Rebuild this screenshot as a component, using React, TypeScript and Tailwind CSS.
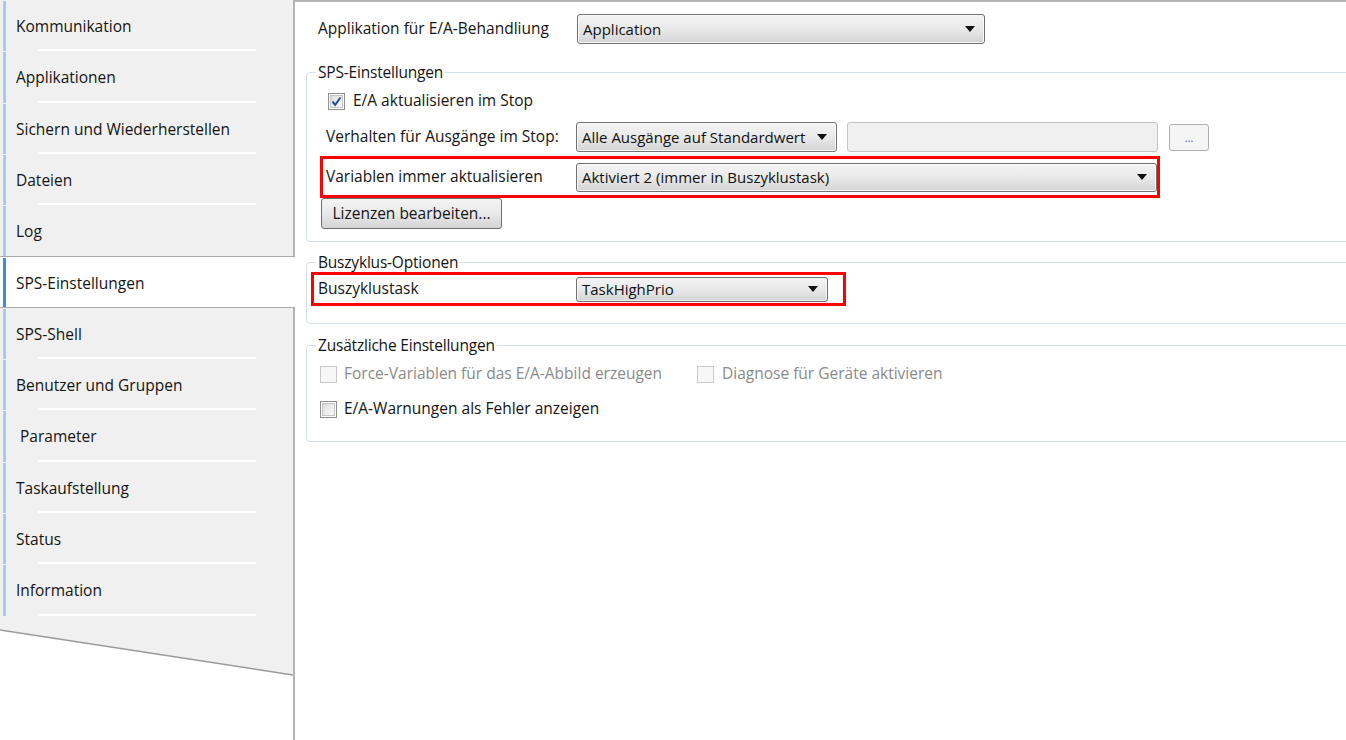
import React from "react";

const items = [
  "Kommunikation",
  "Applikationen",
  "Sichern und Wiederherstellen",
  "Dateien",
  "Log",
  "SPS-Einstellungen",
  "SPS-Shell",
  "Benutzer und Gruppen",
  "\u00a0Parameter",
  "Taskaufstellung",
  "Status",
  "Information",
];

function Arrow() {
  return (
    <svg width="10" height="6" viewBox="0 0 10 6" className="shrink-0">
      <polygon points="0,0 10,0 5,6" fill="#111" />
    </svg>
  );
}

function Combo({ text, className }: { text: string; className: string }) {
  return (
    <div
      className={`flex items-center justify-between rounded-[3px] border border-[#707070] bg-linear-to-b from-[#f4f4f4] via-[#e9e9e9] to-[#d4d4d4] pl-[5px] pr-[9px] text-[15px] shadow-[inset_0_0_0_1px_#fafafa] ${className}`}
    >
      <span className="whitespace-nowrap text-[#111]">{text}</span>
      <Arrow />
    </div>
  );
}

function Check({ state }: { state: "checked" | "unchecked" | "disabled" }) {
  if (state === "disabled") {
    return (
      <div className="h-[17px] w-[17px] shrink-0 border border-[#c9c9c9] bg-[#f7f7f7]" />
    );
  }
  return (
    <div className="flex h-[17px] w-[17px] shrink-0 items-center justify-center border border-[#8e8f8f] bg-white">
      <div className="flex h-[13px] w-[13px] items-center justify-center border border-[#c4c4c4] bg-linear-to-br from-[#dcdcdc] to-[#fbfbfb]">
        {state === "checked" && (
          <svg width="11" height="11" viewBox="0 0 11 11">
            <path d="M1.5 5.5 L4.2 8.8 L9.5 1.5" stroke="#2b4d96" strokeWidth="2" fill="none" />
          </svg>
        )}
      </div>
    </div>
  );
}

function Sidebar() {
  return (
    <div className="flex w-[295px] shrink-0 flex-col bg-white">
      {items.map((t, i) => {
        const sel = i === 5;
        const sep = !sel && i !== 4;
        return (
          <div
            key={i}
            className={`relative flex h-[51.3px] shrink-0 items-center pt-[2px] ${
              sel
                ? "border-y border-[#a9a9a9] bg-white"
                : "border-r-2 border-[#b4b4b4] bg-[#f0f0f0]"
            }`}
          >
            <div
              className={`absolute left-[3px] top-[1px] bottom-0 w-[3px] ${
                sel ? "bg-[#3b8de6]" : "bg-[#a3ccf5]"
              }`}
            />
            <span className="pl-[16px] text-[#141414]">{t}</span>
            {sep && (
              <div className="absolute bottom-0 left-[38px] h-[2px] w-[218px] bg-white" />
            )}
          </div>
        );
      })}
      <svg width="295" height="124" viewBox="0 0 295 124" className="shrink-0">
        <polygon points="0,0 293,0 293,59 0,14" fill="#f0f0f0" />
        <line x1="0" y1="14" x2="293" y2="59" stroke="#9a9a9a" strokeWidth="1.5" />
        <line x1="294" y1="0" x2="294" y2="124" stroke="#b4b4b4" strokeWidth="2" />
      </svg>
    </div>
  );
}

export default function App() {
  return (
    <div className="flex h-[740px] w-[1346px] overflow-hidden bg-white font-['Open_Sans',sans-serif] text-[15.5px] text-[#141414]">
      <Sidebar />
      <div className="min-w-0 flex-1 overflow-hidden border-t-2 border-[#b4b4b4] pl-[11px] pt-[12px]">
        <div className="flex h-[30px] items-center">
          <span className="w-[271px] shrink-0 pl-[12px] whitespace-nowrap">
            Applikation für E/A-Behandliung
          </span>
          <Combo text="Application" className="h-[30px] w-[408px]" />
        </div>

        <fieldset className="mr-[-20px] mt-[18px] rounded-[4px] border border-[#d5dfe5] pb-[12px]">
          <legend className="ml-[9px] px-[2px] leading-[20px] tracking-[-0.2px]">SPS-Einstellungen</legend>
          <div className="mt-[8px] flex h-[22px] items-center gap-[8px] pl-[21px]">
            <Check state="checked" />
            <span>E/A aktualisieren im Stop</span>
          </div>
          <div className="mt-[10px] flex h-[30px] items-center pl-[19px]">
            <span className="w-[250px] shrink-0 whitespace-nowrap">Verhalten für Ausgänge im Stop:</span>
            <Combo text="Alle Ausgänge auf Standardwert" className="h-[30px] w-[261px]" />
            <div className="ml-[10px] h-[30px] w-[311px] rounded-[3px] border border-[#c4c4c4] bg-[#f0f0f0]" />
            <div className="ml-[11px] flex h-[27px] w-[40px] items-center justify-center rounded-[3px] border border-[#b0b0b0] bg-[#f5f5f5] text-[11px] leading-none text-[#4a5a8a]">
              ...
            </div>
          </div>
          <div className="ml-[13px] mt-[4px] flex h-[42px] w-[840px] items-center border-[3px] border-[#ff0000] pl-[3px]">
            <span className="w-[250px] shrink-0 whitespace-nowrap">Variablen immer aktualisieren</span>
            <Combo text="Aktiviert 2 (immer in Buszyklustask)" className="h-[29px] w-[581px]" />
          </div>
          <div className="ml-[14px] flex h-[31px] w-[181px] items-center justify-center rounded-[3px] border border-[#707070] bg-linear-to-b from-[#f4f4f4] via-[#e9e9e9] to-[#d4d4d4] whitespace-nowrap">
            Lizenzen bearbeiten...
          </div>
        </fieldset>

        <fieldset className="mr-[-20px] mt-[10px] rounded-[4px] border border-[#d5dfe5] pb-[17px]">
          <legend className="ml-[9px] px-[2px] leading-[20px] tracking-[-0.2px]">Buszyklus-Optionen</legend>
          <div className="ml-[4px] flex h-[34px] w-[535px] items-center border-[3px] border-[#ff0000] pl-[4px]">
            <span className="w-[258px] shrink-0 whitespace-nowrap">Buszyklustask</span>
            <Combo text="TaskHighPrio" className="h-[25px] w-[252px]" />
          </div>
        </fieldset>

        <fieldset className="mr-[-20px] mt-[11px] rounded-[4px] border border-[#d5dfe5] pb-[21px]">
          <legend className="ml-[9px] px-[2px] leading-[20px] tracking-[-0.2px]">Zusätzliche Einstellungen</legend>
          <div className="mt-[8px] flex h-[22px] items-center pl-[13px]">
            <div className="flex w-[377px] shrink-0 items-center gap-[7px]">
              <Check state="disabled" />
              <span className="whitespace-nowrap text-[#8a8a8a]">Force-Variablen für das E/A-Abbild erzeugen</span>
            </div>
            <div className="flex items-center gap-[8px]">
              <Check state="disabled" />
              <span className="whitespace-nowrap text-[#8a8a8a]">Diagnose für Geräte aktivieren</span>
            </div>
          </div>
          <div className="mt-[13px] flex h-[22px] items-center gap-[7px] pl-[13px]">
            <Check state="unchecked" />
            <span className="whitespace-nowrap">E/A-Warnungen als Fehler anzeigen</span>
          </div>
        </fieldset>
      </div>
    </div>
  );
}
